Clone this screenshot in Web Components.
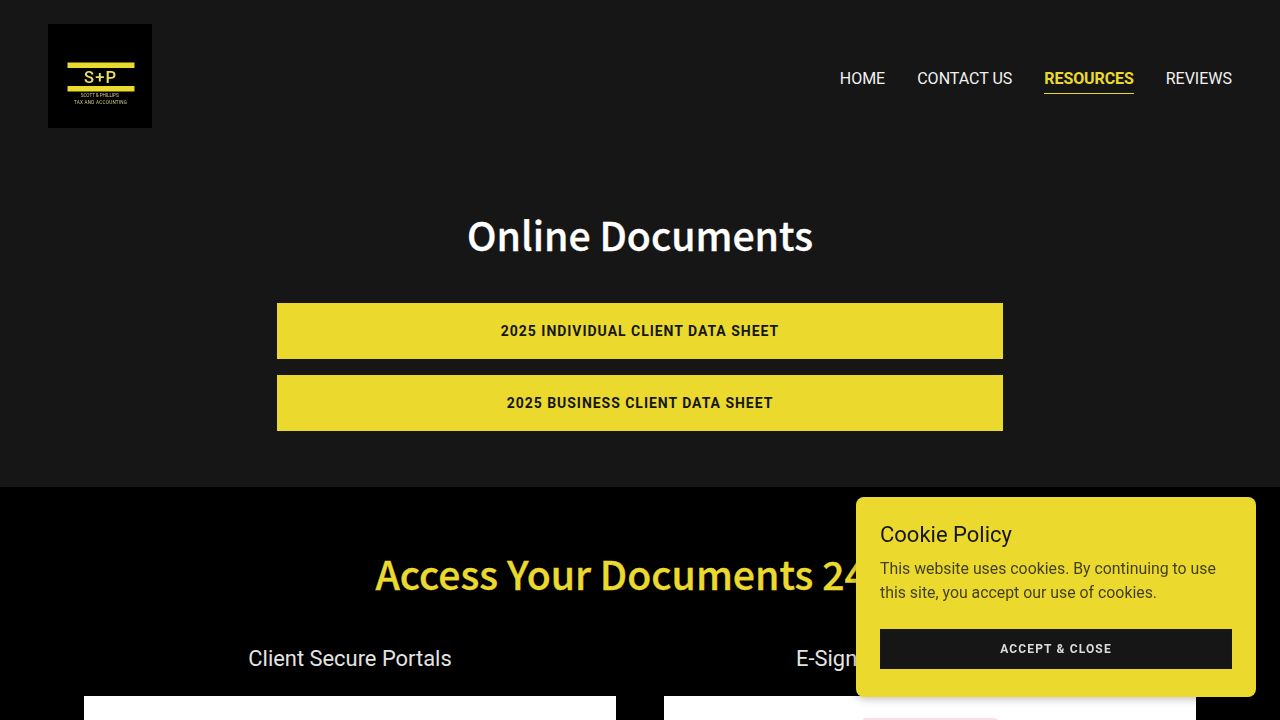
<!DOCTYPE html>
<html lang="en">
<head>
<meta charset="utf-8">
<title>Online Documents</title>
<style>
    html, body {
        margin: 0;
        height: 720px;
        overflow: hidden;
        background: #000;
    }
</style>
</head>
<body>
<site-header>
    <nav-link>HOME</nav-link>
    <nav-link>CONTACT US</nav-link>
    <nav-link active>RESOURCES</nav-link>
    <nav-link>REVIEWS</nav-link>
</site-header>
<docs-hero heading="Online Documents">
    <doc-button>2025 INDIVIDUAL CLIENT DATA SHEET</doc-button>
    <doc-button>2025 BUSINESS CLIENT DATA SHEET</doc-button>
</docs-hero>
<access-section heading="Access Your Documents 24/7">
    <access-card heading="Client Secure Portals"></access-card>
    <access-card heading="E-Signature Tax Documents" badge></access-card>
</access-section>
<cookie-box heading="Cookie Policy" button="ACCEPT &amp; CLOSE">This website uses cookies. By continuing to use this site, you accept our use of cookies.</cookie-box>

<script>
class siteHeader extends HTMLElement {
    constructor () {
        super();
        this.attachShadow({ mode: 'open' });
        this.shadowRoot.innerHTML = `
            <style>
                :host {
                    display: flex;
                    align-items: flex-start;
                    justify-content: space-between;
                    background: #161616;
                    padding: 24px 48px 0;
                    height: 136px;
                    box-sizing: border-box;
                }
                .logo {
                    width: 104px;
                    height: 104px;
                    display: block;
                    background: #000;
                }
                .links {
                    display: flex;
                    gap: 32px;
                    margin-top: 42px;
                }
            </style>
            <svg class="logo" viewBox="0 0 104 104">
                <defs><filter id="soft"><feGaussianBlur stdDeviation="0.350"/></filter></defs>
                <g filter="url(#soft)">
                    <rect x="19.500" y="38.500" width="67" height="5.500" fill="#ebda2d"/>
                    <rect x="19.500" y="62" width="67" height="5.500" fill="#ebda2d"/>
                    <text x="36" y="58.500" font-family="Roboto, sans-serif" font-weight="500" font-size="16.500" fill="#ebde66" textLength="32">S+P</text>
                    <text x="32.700" y="73" font-family="Roboto, sans-serif" font-size="4.600" fill="#cfca8a" textLength="38">SCOTT &amp; PHILLIPS</text>
                    <text x="26" y="80" font-family="Roboto, sans-serif" font-size="4.600" fill="#cfca8a" textLength="53">TAX AND ACCOUNTING</text>
                </g>
            </svg>
            <div class="links"><slot></slot></div>
        `;
    }
}

class navLink extends HTMLElement {
    constructor () {
        super();
        this.attachShadow({ mode: 'open' });
        this.shadowRoot.innerHTML = `
            <style>
                :host {
                    display: block;
                    font: 400 16px/26px Roboto, sans-serif;
                    color: #f2f2f2;
                    padding-bottom: 1px;
                    border-bottom: 1px solid transparent;
                }
                :host([active]) {
                    color: #ebda2d;
                    font-weight: 700;
                    letter-spacing: -0.1px;
                    border-bottom-color: #ebda2d;
                }
            </style>
            <slot></slot>
        `;
    }
}

class docsHero extends HTMLElement {
    constructor () {
        super();
        this.attachShadow({ mode: 'open' });
        this.shadowRoot.innerHTML = `
            <style>
                :host {
                    display: block;
                    background: #161616;
                    height: 351px;
                    padding-top: 70px;
                    box-sizing: border-box;
                }
                h1 {
                    margin: 0 0 40px;
                    font: 500 39.200px/57px "Noto Sans CJK SC", "Noto Sans", sans-serif;
                    -webkit-text-stroke: 0.350px currentColor;
                    color: #fff;
                    text-align: center;
                }
                .buttons {
                    width: 726px;
                    margin: 0 auto;
                    display: flex;
                    flex-direction: column;
                    gap: 16px;
                }
            </style>
            <h1></h1>
            <div class="buttons"><slot></slot></div>
        `;
    }
    connectedCallback() {
        this.shadowRoot.querySelector('h1').textContent = this.getAttribute('heading');
    }
}

class docButton extends HTMLElement {
    constructor () {
        super();
        this.attachShadow({ mode: 'open' });
        this.shadowRoot.innerHTML = `
            <style>
                :host {
                    display: flex;
                    align-items: center;
                    justify-content: center;
                    height: 56px;
                    background: #ebda2d;
                    color: #161616;
                    font: 700 14px/20px Roboto, sans-serif;
                    letter-spacing: 0.97px;
                }
            </style>
            <slot></slot>
        `;
    }
}

class accessSection extends HTMLElement {
    constructor () {
        super();
        this.attachShadow({ mode: 'open' });
        this.shadowRoot.innerHTML = `
            <style>
                :host {
                    display: block;
                    background: #000;
                    padding-top: 58px;
                }
                h2 {
                    margin: 0 0 42px;
                    font: 500 39.200px/57px "Noto Sans CJK SC", "Noto Sans", sans-serif;
                    -webkit-text-stroke: 0.350px currentColor;
                    color: #ebda2d;
                    text-align: center;
                }
                .cols {
                    display: grid;
                    grid-template-columns: 532px 532px;
                    gap: 48px;
                    justify-content: center;
                }
            </style>
            <h2></h2>
            <div class="cols"><slot></slot></div>
        `;
    }
    connectedCallback() {
        this.shadowRoot.querySelector('h2').textContent = this.getAttribute('heading');
    }
}

class accessCard extends HTMLElement {
    constructor () {
        super();
        this.attachShadow({ mode: 'open' });
        this.shadowRoot.innerHTML = `
            <style>
                :host {
                    display: block;
                }
                h3 {
                    margin: 0 0 22px;
                    font: 400 21.900px/30px Roboto, sans-serif;
                    color: #e4e4e4;
                    text-align: center;
                }
                .panel {
                    height: 24px;
                    background: #fff;
                    padding-top: 22px;
                    box-sizing: border-box;
                    overflow: hidden;
                }
                .badge {
                    display: none;
                    width: 136px;
                    height: 40px;
                    margin: 0 auto;
                    background: #fddde6;
                    border-radius: 4px;
                }
                :host([badge]) .badge {
                    display: block;
                }
            </style>
            <h3></h3>
            <div class="panel"><div class="badge"></div></div>
        `;
    }
    connectedCallback() {
        this.shadowRoot.querySelector('h3').textContent = this.getAttribute('heading');
    }
}

class cookieBox extends HTMLElement {
    constructor () {
        super();
        this.attachShadow({ mode: 'open' });
        this.shadowRoot.innerHTML = `
            <style>
                :host {
                    position: fixed;
                    left: 856px;
                    top: 497px;
                    width: 400px;
                    height: 200px;
                    box-sizing: border-box;
                    padding: 24px;
                    background: #ebda2d;
                    border-radius: 8px;
                    box-shadow: 0 2px 8px rgba(0, 0, 0, .25);
                    display: flex;
                    flex-direction: column;
                }
                h4 {
                    margin: 0 0 9px;
                    font: 400 22px/27px Roboto, sans-serif;
                    color: #161616;
                }
                p {
                    margin: 0 0 24px;
                    font: 400 15.850px/24px Roboto, sans-serif;
                    color: rgba(22, 22, 22, .8);
                }
                button {
                    height: 40px;
                    padding: 0;
                    border: 0;
                    background: #161616;
                    color: #dcdcdc;
                    font: 700 12px/16px Roboto, sans-serif;
                    letter-spacing: 1.150px;
                }
            </style>
            <h4></h4>
            <p><slot></slot></p>
            <button></button>
        `;
    }
    connectedCallback() {
        this.shadowRoot.querySelector('h4').textContent = this.getAttribute('heading');
        this.shadowRoot.querySelector('button').textContent = this.getAttribute('button');
    }
}

customElements.define('site-header', siteHeader);
customElements.define('nav-link', navLink);
customElements.define('docs-hero', docsHero);
customElements.define('doc-button', docButton);
customElements.define('access-section', accessSection);
customElements.define('access-card', accessCard);
customElements.define('cookie-box', cookieBox);
</script>
</body>
</html>
